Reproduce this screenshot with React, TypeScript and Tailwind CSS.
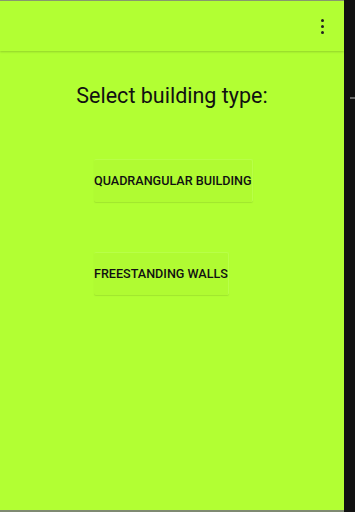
import React from 'react';

const App: React.FC = () => {
  return (
    <div className="flex h-[512px] w-[355px] bg-[#111111] font-['Roboto',sans-serif]">
      <div className="flex w-[344px] flex-col border-t border-b-2 border-t-[#8a9a70] border-b-[#7f8a72] bg-[#b2ff33]">
        <header className="flex h-[50px] shrink-0 items-center justify-end pr-[20px] shadow-[0_1px_2px_rgba(0,0,0,0.18)]">
          <div className="flex flex-col gap-[3px]">
            <span className="block h-[3px] w-[3px] rounded-full bg-[#222]" />
            <span className="block h-[3px] w-[3px] rounded-full bg-[#222]" />
            <span className="block h-[3px] w-[3px] rounded-full bg-[#222]" />
          </div>
        </header>
        <main className="flex flex-col">
          <h1 className="mt-[31px] text-center text-[21.5px] leading-[28px] text-[#111]">
            Select building type:
          </h1>
          <div className="ml-[94px] mt-[49px] flex flex-col items-start gap-[50px]">
            <button className="flex h-[43px] items-center rounded-[2px] border-t border-r border-[#b8ff48] bg-[#b0fb32] text-[12.6px] font-medium text-[#111] shadow-[0_1px_1px_rgba(0,0,0,0.1)]">
              QUADRANGULAR BUILDING
            </button>
            <button className="flex h-[43px] items-center rounded-[2px] border-t border-r border-[#b8ff48] bg-[#b0fb32] text-[12.6px] font-medium text-[#111] shadow-[0_1px_1px_rgba(0,0,0,0.1)]">
              FREESTANDING WALLS
            </button>
          </div>
        </main>
      </div>
      <div className="relative flex-1">
        <span className="absolute left-[6px] top-[97px] h-[2px] w-[5px] bg-[#666]" />
      </div>
    </div>
  );
};

export default App;
